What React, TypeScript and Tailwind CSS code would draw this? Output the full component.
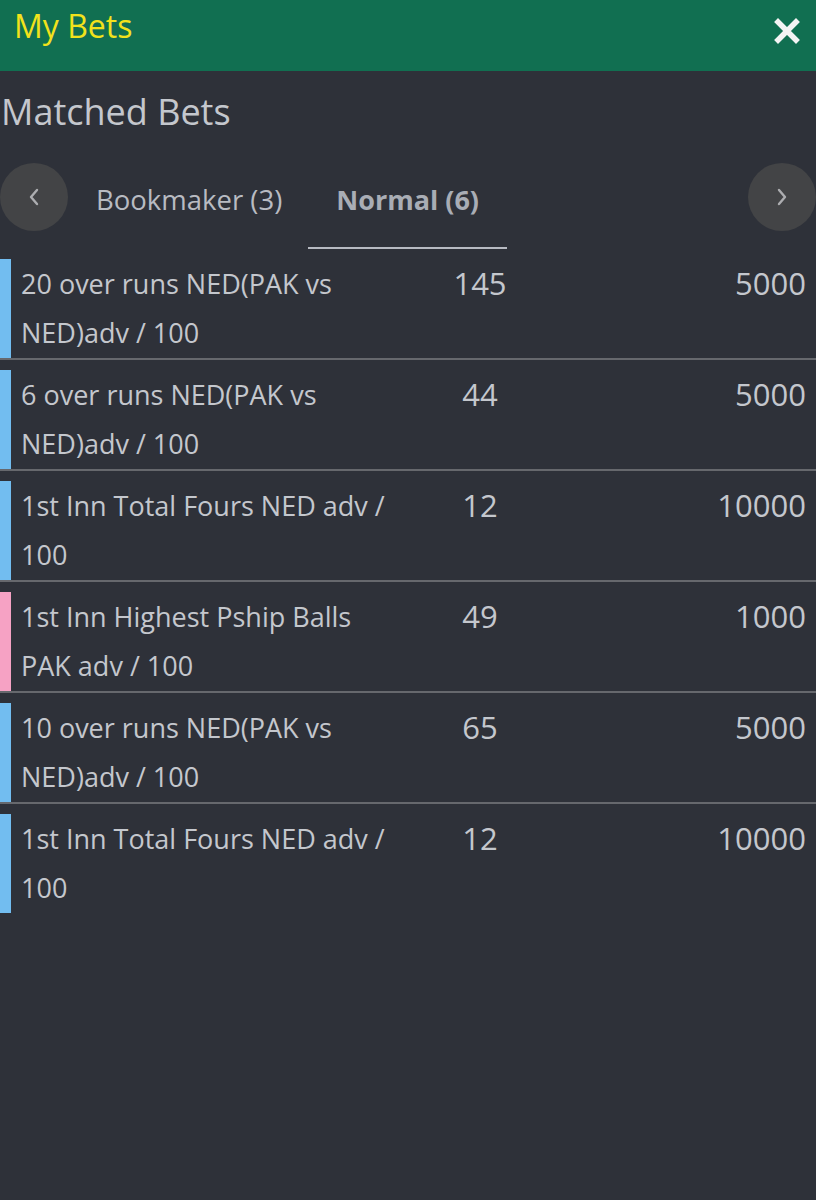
import React from 'react';

type Bet = { label: string; odds: string; stake: string; side: 'back' | 'lay' };

const bets: Bet[] = [
  { label: '20 over runs NED(PAK vs NED)adv / 100', odds: '145', stake: '5000', side: 'back' },
  { label: '6 over runs NED(PAK vs NED)adv / 100', odds: '44', stake: '5000', side: 'back' },
  { label: '1st Inn Total Fours NED adv / 100', odds: '12', stake: '10000', side: 'back' },
  { label: '1st Inn Highest Pship Balls PAK adv / 100', odds: '49', stake: '1000', side: 'lay' },
  { label: '10 over runs NED(PAK vs NED)adv / 100', odds: '65', stake: '5000', side: 'back' },
  { label: '1st Inn Total Fours NED adv / 100', odds: '12', stake: '10000', side: 'back' },
];

function Chevron({ dir }: { dir: 'left' | 'right' }) {
  return (
    <svg width="14" height="20" viewBox="0 0 14 20" fill="none" stroke="#acadb0" strokeWidth="2.4" strokeLinecap="round" strokeLinejoin="round">
      {dir === 'left' ? <path d="M10 3 L4 10 L10 17" /> : <path d="M4 3 L10 10 L4 17" />}
    </svg>
  );
}

export default function App() {
  return (
    <div className="min-h-[1200px] w-[816px] bg-[#2e3139] font-['Open_Sans','Noto_Sans',sans-serif] text-[#c4c7cd]">
      {/* Header */}
      <header className="flex h-[71px] items-start justify-between bg-[#116f51] pl-[14px] pr-[16px]">
        <h1 className="pt-[10px] text-[32px] leading-none text-[#f2e21c]">My Bets</h1>
        <button className="mt-[18px] flex h-[26px] w-[26px] items-center justify-center">
          <svg width="26" height="26" viewBox="0 0 26 26" stroke="#f4f4f4" strokeWidth="5.5" strokeLinecap="square">
            <path d="M4 4 L22 22 M22 4 L4 22" />
          </svg>
        </button>
      </header>

      {/* Title */}
      <h2 className="mt-[21px] pl-[1px] text-[36px] leading-[40px] text-[#c4c7cd]">Matched Bets</h2>

      {/* Tabs */}
      <div className="mt-[31px] flex items-start">
        <button className="flex h-[68px] w-[68px] shrink-0 items-center justify-center rounded-full bg-[#434446]">
          <Chevron dir="left" />
        </button>
        <div className="flex">
          <div className="flex h-[86px] items-center pl-[28px] pr-[26px] pb-[12px] text-[27.5px] text-[#b8bbc2]">Bookmaker (3)</div>
          <div className="flex h-[86px] items-center border-b-2 border-[#b7bac2] px-[28px] pb-[10px] text-[27px] font-bold text-[#a9adb5]">
            Normal (6)
          </div>
        </div>
        <div className="flex-1" />
        <button className="flex h-[68px] w-[68px] shrink-0 items-center justify-center rounded-full bg-[#434446]">
          <Chevron dir="right" />
        </button>
      </div>

      {/* Bets */}
      <div>
        {bets.map((b, i) => (
          <div
            key={i}
            className={`mt-[10px] flex ${i < bets.length - 1 ? 'border-b-2 border-[#66686d]' : ''}`}
          >
            <div className={`w-[11px] shrink-0 ${b.side === 'back' ? 'bg-[#72bdf0]' : 'bg-[#f6a2c4]'}`} />
            <div className="flex h-[99px] flex-1 leading-[49px]">
              <div className="w-[397px] shrink-0 pl-[10px] text-[27px]">{b.label}</div>
              <div className="w-[144px] shrink-0 text-center text-[31px]">{b.odds}</div>
              <div className="flex-1 pr-[10px] text-right text-[31px]">{b.stake}</div>
            </div>
          </div>
        ))}
      </div>
    </div>
  );
}
